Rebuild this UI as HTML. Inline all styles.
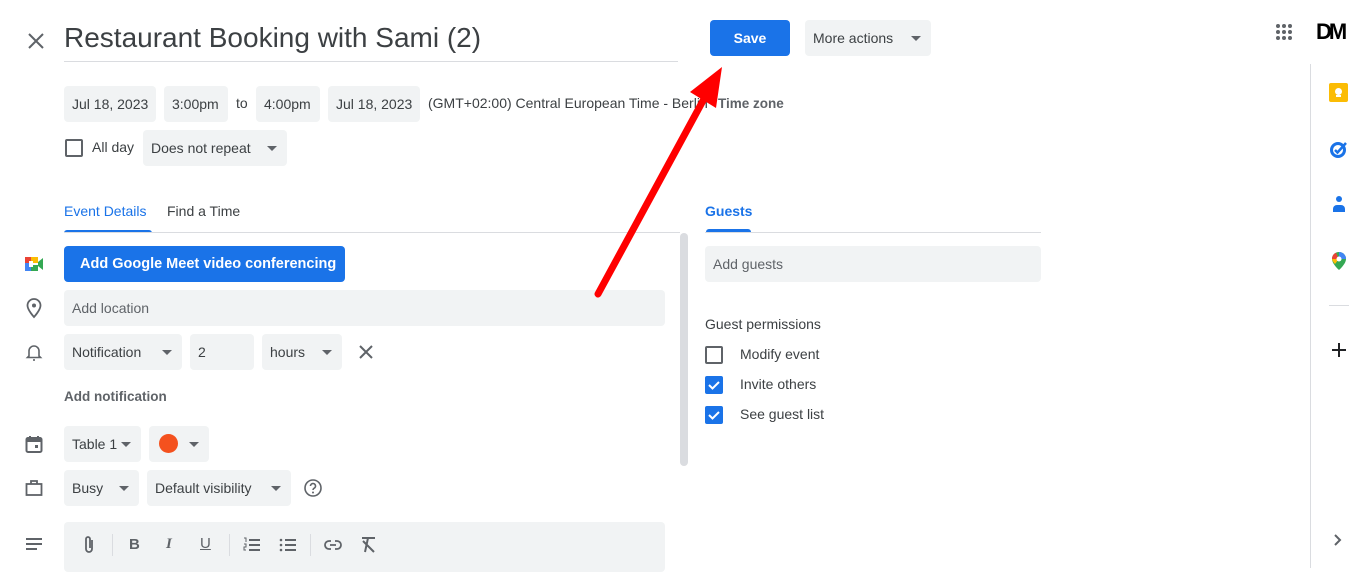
<!DOCTYPE html>
<html><head><meta charset="utf-8"><style>
*{margin:0;padding:0;box-sizing:border-box}
body{width:1366px;height:568px;overflow:hidden;background:#fff;font-family:"Liberation Sans",Arial,sans-serif;color:#3c4043;position:relative;font-size:14px}
.a{position:absolute}
.box{position:absolute;background:#f1f3f4;border-radius:4px;height:36px;line-height:36px;padding-left:8px;font-size:14px;color:#3c4043}
.dd::after{content:"";position:absolute;right:10px;top:16px;border:5px solid transparent;border-top-color:#5f6368;border-bottom:0}
.cb{position:absolute;width:18px;height:18px;border:2px solid #5f6368;border-radius:2px}
.cbc{position:absolute;width:18px;height:18px;background:#1a73e8;border-radius:2px}
.ic{position:absolute}
</style></head><body>
<svg class="ic" style="left:26px;top:31px" width="20" height="20" viewBox="0 0 20 20"><path d="M3 3L17 17M17 3L3 17" stroke="#5f6368" stroke-width="2"/></svg>
<div class="a" style="left:64px;top:22px;font-size:28px;color:#3c4043">Restaurant Booking with Sami (2)</div>
<div class="a" style="left:64px;top:61px;width:614px;height:1px;background:#dadce0"></div>
<div class="a" style="left:710px;top:20px;width:80px;height:36px;background:#1a73e8;border-radius:4px;color:#fff;font-weight:bold;text-align:center;line-height:36px;font-size:14px">Save</div>
<div class="box dd" style="left:805px;top:20px;width:126px">More actions</div>
<svg class="ic" style="left:1275px;top:23px" width="18" height="18" viewBox="0 0 18 18" fill="#5f6368"><circle cx="3" cy="3" r="2"/><circle cx="9" cy="3" r="2"/><circle cx="15" cy="3" r="2"/><circle cx="3" cy="9" r="2"/><circle cx="9" cy="9" r="2"/><circle cx="15" cy="9" r="2"/><circle cx="3" cy="15" r="2"/><circle cx="9" cy="15" r="2"/><circle cx="15" cy="15" r="2"/></svg>
<div class="a" style="left:1316px;top:19px;font-size:22px;font-weight:bold;color:#000;letter-spacing:-3px">DM</div>

<div class="box" style="left:64px;top:86px;width:92px">Jul 18, 2023</div>
<div class="box" style="left:164px;top:86px;width:64px">3:00pm</div>
<div class="a" style="left:236px;top:95px">to</div>
<div class="box" style="left:256px;top:86px;width:64px">4:00pm</div>
<div class="box" style="left:328px;top:86px;width:92px">Jul 18, 2023</div>
<div class="a" style="left:428px;top:95px">(GMT+02:00) Central European Time - Berlin</div>
<div class="a" style="left:718px;top:96px;color:#5f6368;font-weight:bold;font-size:13.5px">Time zone</div>
<div class="cb" style="left:65px;top:139px"></div>
<div class="a" style="left:92px;top:139px">All day</div>
<div class="box dd" style="left:143px;top:130px;width:144px">Does not repeat</div>

<div class="a" style="left:64px;top:203px;color:#1a73e8">Event Details</div>
<div class="a" style="left:167px;top:203px">Find a Time</div>
<div class="a" style="left:64px;top:230px;width:88px;height:3px;background:#1a73e8;border-radius:3px 3px 0 0"></div>
<div class="a" style="left:64px;top:232px;width:616px;height:1px;background:#dadce0"></div>
<div class="a" style="left:680px;top:233px;width:8px;height:233px;background:#dadce0;border-radius:4px"></div>

<div class="a" style="left:705px;top:203px;color:#1a73e8;font-weight:bold">Guests</div>
<div class="a" style="left:706px;top:229px;width:45px;height:3px;background:#1a73e8;border-radius:3px 3px 0 0"></div>
<div class="a" style="left:705px;top:232px;width:336px;height:1px;background:#dadce0"></div>
<div class="box" style="left:705px;top:246px;width:336px;color:#5f6368">Add guests</div>
<div class="a" style="left:705px;top:316px">Guest permissions</div>
<div class="cb" style="left:705px;top:346px"></div><div class="a" style="left:740px;top:346px">Modify event</div>
<div class="cbc" style="left:705px;top:376px"><svg width="18" height="18"><path d="M4 9l3.5 3.5L14 6" stroke="#fff" stroke-width="2" fill="none"/></svg></div><div class="a" style="left:740px;top:376px">Invite others</div>
<div class="cbc" style="left:705px;top:406px"><svg width="18" height="18"><path d="M4 9l3.5 3.5L14 6" stroke="#fff" stroke-width="2" fill="none"/></svg></div><div class="a" style="left:740px;top:406px">See guest list</div>

<svg class="ic" style="left:24px;top:254px" width="20" height="20" viewBox="0 0 20 20"><rect x="1" y="3" width="6" height="6" fill="#ea4335"/><rect x="7" y="3" width="7" height="6" fill="#fbbc04"/><rect x="1" y="9" width="6" height="8" fill="#4285f4"/><rect x="7" y="11" width="7" height="6" fill="#34a853"/><rect x="5" y="7" width="4" height="6" fill="#fff"/><path d="M14 8l5-4v12l-5-4z" fill="#34a853"/></svg>
<div class="a" style="left:64px;top:246px;width:281px;height:36px;background:#1a73e8;border-radius:4px;color:#fff;font-weight:bold;line-height:36px;padding-left:16px;font-size:14.5px">Add Google Meet video conferencing</div>
<svg class="ic" style="left:25px;top:297px" width="18" height="22" viewBox="0 0 18 22"><path d="M9 2a6.5 6.5 0 0 0-6.5 6.5C2.5 13 9 20 9 20s6.5-7 6.5-11.5A6.5 6.5 0 0 0 9 2z" stroke="#5f6368" stroke-width="1.8" fill="none"/><circle cx="9" cy="8.5" r="2" fill="#5f6368"/></svg>
<div class="box" style="left:64px;top:290px;width:601px;color:#5f6368">Add location</div>
<svg class="ic" style="left:25px;top:342px" width="18" height="20" viewBox="0 0 18 20"><path d="M4 14V9a5 5 0 0 1 10 0v5l1.5 1.5h-13z" stroke="#5f6368" stroke-width="1.6" fill="none"/><path d="M8 18h2" stroke="#5f6368" stroke-width="1.6"/></svg>
<div class="box dd" style="left:64px;top:334px;width:118px">Notification</div>
<div class="box" style="left:190px;top:334px;width:64px">2</div>
<div class="box dd" style="left:262px;top:334px;width:80px">hours</div>
<svg class="ic" style="left:359px;top:345px" width="14" height="14" viewBox="0 0 14 14"><path d="M1 1L13 13M13 1L1 13" stroke="#5f6368" stroke-width="2"/></svg>
<div class="a" style="left:64px;top:389px;font-weight:bold;color:#5f6368;font-size:13.5px">Add notification</div>

<svg class="ic" style="left:25px;top:435px" width="18" height="18" viewBox="0 0 18 18"><rect x="1.5" y="3" width="15" height="14" rx="1.5" stroke="#5f6368" stroke-width="2" fill="none"/><rect x="1.5" y="3" width="15" height="4" fill="#5f6368"/><path d="M5 1v3M13 1v3" stroke="#5f6368" stroke-width="2"/><rect x="10" y="10" width="3" height="3" fill="#5f6368"/></svg>
<div class="box dd" style="left:64px;top:426px;width:77px">Table 1</div>
<div class="box dd" style="left:149px;top:426px;width:60px"><span style="position:absolute;left:10px;top:8px;width:19px;height:19px;border-radius:50%;background:#f4511e"></span></div>
<svg class="ic" style="left:25px;top:479px" width="18" height="18" viewBox="0 0 18 18"><rect x="1.5" y="5" width="15" height="11" stroke="#5f6368" stroke-width="1.8" fill="none"/><path d="M6 5V2h6v3" stroke="#5f6368" stroke-width="1.8" fill="none"/></svg>
<div class="box dd" style="left:64px;top:470px;width:75px">Busy</div>
<div class="box dd" style="left:147px;top:470px;width:144px">Default visibility</div>
<svg class="ic" style="left:303px;top:478px" width="20" height="20" viewBox="0 0 20 20"><circle cx="10" cy="10" r="8" stroke="#5f6368" stroke-width="1.6" fill="none"/><path d="M7.5 8a2.5 2.5 0 1 1 3.5 2.3c-.7.4-1 .8-1 1.7" stroke="#5f6368" stroke-width="1.6" fill="none"/><circle cx="10" cy="14.5" r="1" fill="#5f6368"/></svg>

<svg class="ic" style="left:25px;top:537px" width="18" height="14" viewBox="0 0 18 14"><path d="M1 2h16M1 7h16M1 12h11" stroke="#5f6368" stroke-width="2"/></svg>
<div class="a" style="left:64px;top:522px;width:601px;height:50px;background:#f1f3f4;border-radius:4px"></div>
<svg class="ic" style="left:82px;top:535px" width="14" height="20" viewBox="0 0 14 20"><path d="M10 5v9a3 3 0 0 1-6 0V4a2 2 0 0 1 4 0v9" stroke="#5f6368" stroke-width="1.8" fill="none"/></svg>
<div class="a" style="left:112px;top:534px;width:1px;height:22px;background:#dadce0"></div>
<div class="a" style="left:129px;top:536px;font-weight:bold;font-size:15px;color:#5f6368">B</div>
<div class="a" style="left:166px;top:536px;font-style:italic;font-weight:bold;font-size:15px;color:#5f6368;font-family:'Liberation Serif',serif">I</div>
<div class="a" style="left:200px;top:535px;font-size:15px;color:#5f6368;text-decoration:underline">U</div>
<div class="a" style="left:229px;top:534px;width:1px;height:22px;background:#dadce0"></div>
<svg class="ic" style="left:243px;top:537px" width="18" height="16" viewBox="0 0 18 16"><path d="M6 3h11M6 8h11M6 13h11" stroke="#5f6368" stroke-width="2"/><path d="M1 1h2v4M1 7h2v3H1v3h2" stroke="#5f6368" stroke-width="1" fill="none"/></svg>
<svg class="ic" style="left:279px;top:537px" width="18" height="16" viewBox="0 0 18 16"><path d="M6 3h11M6 8h11M6 13h11" stroke="#5f6368" stroke-width="2"/><circle cx="2" cy="3" r="1.3" fill="#5f6368"/><circle cx="2" cy="8" r="1.3" fill="#5f6368"/><circle cx="2" cy="13" r="1.3" fill="#5f6368"/></svg>
<div class="a" style="left:310px;top:534px;width:1px;height:22px;background:#dadce0"></div>
<svg class="ic" style="left:324px;top:539px" width="18" height="12" viewBox="0 0 18 12"><path d="M7 2H5a4 4 0 0 0 0 8h2M11 2h2a4 4 0 0 1 0 8h-2M6 6h6" stroke="#5f6368" stroke-width="1.8" fill="none"/></svg>
<svg class="ic" style="left:360px;top:536px" width="18" height="18" viewBox="0 0 18 18"><path d="M2 2h13M8 2l-3 14M3 5l11 11" stroke="#5f6368" stroke-width="2" fill="none"/></svg>

<div class="a" style="left:1310px;top:64px;width:1px;height:504px;background:#dadce0"></div>
<div class="a" style="left:1329px;top:83px;width:19px;height:19px;background:#fbbc04;border-radius:2px"><span class="a" style="left:6px;top:5px;width:7px;height:7px;border-radius:50%;background:#fff"></span><span class="a" style="left:7px;top:12px;width:5px;height:2px;background:#fff"></span></div>
<svg class="ic" style="left:1329px;top:139px" width="20" height="20" viewBox="0 0 20 20"><circle cx="9" cy="11" r="6.5" stroke="#1a73e8" stroke-width="3" fill="none"/><path d="M6 11l2.5 2.5L17 4" stroke="#1a73e8" stroke-width="2.5" fill="none"/></svg>
<svg class="ic" style="left:1331px;top:195px" width="16" height="18" viewBox="0 0 16 18"><circle cx="8" cy="4" r="3" fill="#1a73e8"/><path d="M2 17v-3a4 4 0 0 1 4-4h4a4 4 0 0 1 4 4v3z" fill="#1a73e8"/></svg>
<svg class="ic" style="left:1331px;top:251px" width="16" height="20" viewBox="0 0 16 20"><path d="M8 1a7 7 0 0 0-7 7c0 5 7 11 7 11s7-6 7-11a7 7 0 0 0-7-7z" fill="#34a853"/><path d="M1 8a7 7 0 0 1 4-6.3L8 8z" fill="#ea4335"/><path d="M8 1a7 7 0 0 1 7 7L8 8z" fill="#4285f4"/><path d="M1 8l7 0-4 5c-2-2-3-4-3-5z" fill="#fbbc04"/><circle cx="8" cy="8" r="2.5" fill="#fff"/></svg>
<div class="a" style="left:1329px;top:305px;width:20px;height:1px;background:#dadce0"></div>
<svg class="ic" style="left:1331px;top:342px" width="16" height="16" viewBox="0 0 16 16"><path d="M8 1v14M1 8h14" stroke="#202124" stroke-width="2"/></svg>
<svg class="ic" style="left:1333px;top:533px" width="10" height="14" viewBox="0 0 10 14"><path d="M2 2l5 5-5 5" stroke="#5f6368" stroke-width="2" fill="none"/></svg>

<svg class="a" style="left:0;top:0" width="1366" height="568" viewBox="0 0 1366 568"><path d="M598 294L705 97" stroke="#ff0000" stroke-width="7" stroke-linecap="round"/><path d="M722 67L690 92L716 108z" fill="#ff0000"/></svg>
</body></html>
